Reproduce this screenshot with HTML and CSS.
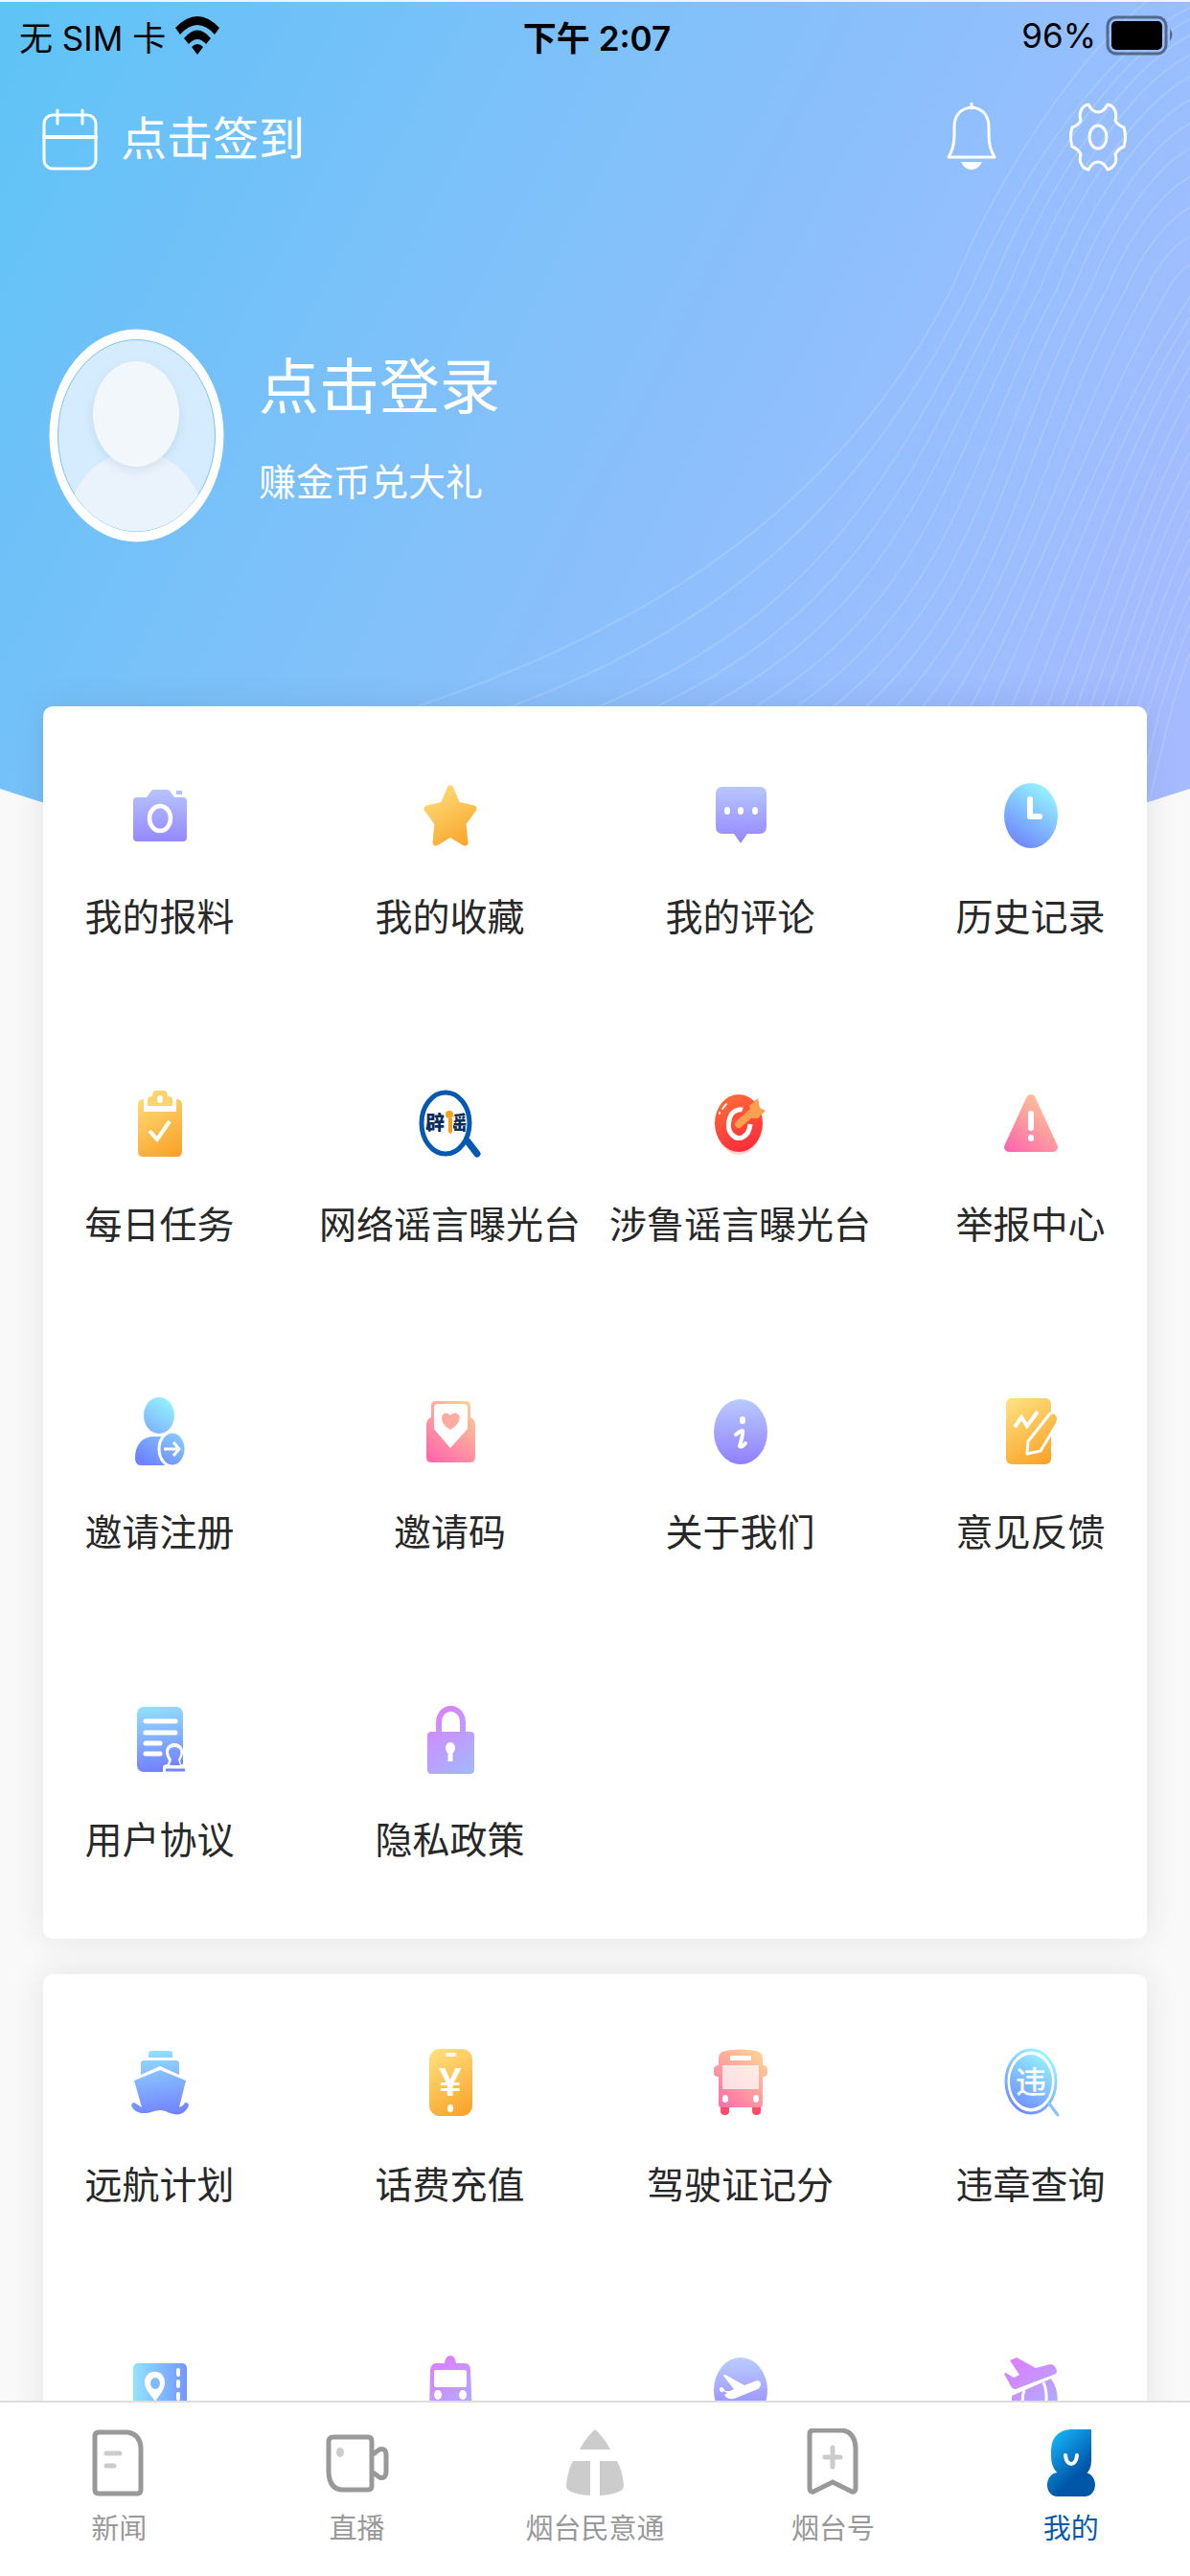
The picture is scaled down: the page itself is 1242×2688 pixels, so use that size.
FILE: index.html
```html
<!DOCTYPE html>
<html lang="zh-CN">
    <head>
        <meta charset="utf-8">
        <meta name="viewport" content="width=device-width, initial-scale=1">
        <title>我的</title>
        <link rel="stylesheet" href="styles.css">
    </head>
    <body>
        <!-- shared icon gradients -->
        <svg class="defs" width="0" height="0" aria-hidden="true">
            <defs>
                <linearGradient id="purple" gradientUnits="userSpaceOnUse" x1="34" y1="4" x2="34" y2="72"><stop offset="0" stop-color="#b9ccff"/><stop offset="1" stop-color="#9180ff"/></linearGradient>
                <linearGradient id="orange" gradientUnits="userSpaceOnUse" x1="14" y1="4" x2="54" y2="72"><stop offset="0" stop-color="#ffe07f"/><stop offset="1" stop-color="#f9a126"/></linearGradient>
                <linearGradient id="blue" gradientUnits="userSpaceOnUse" x1="14" y1="68" x2="54" y2="10"><stop offset="0" stop-color="#6d83ff"/><stop offset="1" stop-color="#96f6ff"/></linearGradient>
                <linearGradient id="sky" gradientUnits="userSpaceOnUse" x1="28" y1="2" x2="38" y2="72"><stop offset="0" stop-color="#93e2ff"/><stop offset="1" stop-color="#7280ff"/></linearGradient>
                <linearGradient id="pink" gradientUnits="userSpaceOnUse" x1="12" y1="68" x2="58" y2="10"><stop offset="0" stop-color="#ff66ac"/><stop offset="1" stop-color="#ffd194"/></linearGradient>
                <linearGradient id="violet" gradientUnits="userSpaceOnUse" x1="14" y1="10" x2="58" y2="72"><stop offset="0" stop-color="#dc80ff"/><stop offset="1" stop-color="#a2b8ff"/></linearGradient>
                <linearGradient id="red" gradientUnits="userSpaceOnUse" x1="18" y1="10" x2="44" y2="66"><stop offset="0" stop-color="#ff6a38"/><stop offset="1" stop-color="#ff2b3c"/></linearGradient>
                <linearGradient id="brand" gradientUnits="userSpaceOnUse" x1="10" y1="10" x2="56" y2="60"><stop offset="0" stop-color="#16b4fa"/><stop offset=".7" stop-color="#0057a8"/></linearGradient>
            </defs>
        </svg>
        <div class="screen">
            <main class="content">
                <svg class="backdrop" viewBox="0 0 1242 930" preserveAspectRatio="none" aria-hidden="true">
                    <defs>
                        <linearGradient id="skyBg" gradientUnits="userSpaceOnUse" x1="0" y1="100" x2="1240" y2="740">
                            <stop offset="0" stop-color="#60c3f6"/>
                            <stop offset=".2" stop-color="#72c1f9"/>
                            <stop offset=".5" stop-color="#86c0fa"/>
                            <stop offset=".77" stop-color="#99beff"/>
                            <stop offset="1" stop-color="#a6bbff"/>
                        </linearGradient>
                        <clipPath id="curve"><path d="M0 0H1242V821Q621 1028 0 821Z"/></clipPath>
                    </defs>
                    <path d="M0 0H1242V821Q621 1028 0 821Z" fill="url(#skyBg)"/>
                    <g id="waves" clip-path="url(#curve)"></g>
                </svg>
                <div class="status">
                    <div class="carrier">
                        <span>无 SIM 卡</span>
                        <svg width="46" height="40" viewBox="0 0 46 40"><path d="M0 12Q23-12 46 12L41 19Q23-1 5 19ZM9 23Q23 6 37 23L32 29Q23 19 14 29ZM17 32Q23 26 29 32L23 40Z"/></svg>
                    </div>
                    <div class="time">下午 2:07</div>
                    <div class="power">
                        <span>96%</span>
                        <svg width="72" height="42" viewBox="0 0 72 42"><rect x="2" y="2" width="61" height="38" rx="9" fill="none" stroke="#000" stroke-opacity=".45" stroke-width="3"/><rect x="6" y="6" width="53" height="30" rx="5"/><path d="M67 14Q72 20 67 27Z" fill-opacity=".45"/></svg>
                    </div>
                </div>
                <div class="toolbar">
                    <button class="signin">
                        <svg width="58" height="66" viewBox="0 0 58 66" fill="none" stroke="#fff" stroke-width="3" stroke-linecap="round"><rect x="2" y="7" width="54" height="56" rx="9"/><path d="M2 30H56" stroke-width="4"/><path d="M16 2V16M42 2V16"/></svg>
                        <span>点击签到</span>
                    </button>
                    <div class="tools">
                        <button aria-label="消息">
                            <svg width="60" height="72" viewBox="0 0 60 72" fill="none" stroke="#fff" stroke-width="3"><path d="M6 57Q12 47 12 34V26C12 12 20 6 30 5C40 6 48 12 48 26V34Q48 47 54 57Z" stroke-linejoin="round"/><path d="M30 1V6" stroke-linecap="round"/><path d="M19 62H41Q37 70 30 70Q23 70 19 62Z" fill="#fff" stroke="none"/></svg>
                        </button>
                        <button aria-label="设置">
                            <svg width="60" height="72" viewBox="0 0 60 72" fill="none" stroke="#fff" stroke-width="3" stroke-linejoin="round"><path d="M13 7Q15 3 20 2Q24 10 30 10Q36 10 40 2Q45 3 47 7Q50 11 48 19Q51 24 57 26Q60 36 57 46Q51 48 48 54Q50 61 47 65Q44 69 40 70Q36 62 30 62Q24 62 20 70Q15 69 13 65Q10 61 12 54Q9 48 3 46Q0 36 3 26Q9 24 12 19Q10 11 13 7Z"/><ellipse cx="30" cy="36" rx="9" ry="12"/></svg>
                        </button>
                    </div>
                </div>
                <div class="profile">
                    <svg class="avatar" viewBox="0 0 183 223" aria-hidden="true">
                        <defs><clipPath id="face"><ellipse cx="91.500" cy="111.500" rx="82" ry="100"/></clipPath></defs>
                        <ellipse cx="91.500" cy="111.500" rx="91" ry="111" fill="#fff"/>
                        <ellipse cx="91.500" cy="111.500" rx="82" ry="100" fill="#d4ecfd" stroke="#7bc3f6"/>
                        <g clip-path="url(#face)">
                            <ellipse cx="91" cy="208" rx="72" ry="80" fill="#eaf3fc"/>
                            <ellipse class="head" cx="91" cy="89" rx="45" ry="55" fill="#f2f7fb"/>
                        </g>
                    </svg>
                    <div class="login">
                        <a class="name" href="#">点击登录</a>
                        <a class="tip" href="#">赚金币兑大礼</a>
                    </div>
                </div>
                <section class="card">
                    <div class="grid">
                        <a class="item" href="#">
                            <svg viewBox="0 0 68 76"><path d="M10 19H20L25 12Q26 11 28 11H41Q43 11 44 12L49 19H58Q62 19 62 23V61Q62 65 58 65H10Q6 65 6 61V23Q6 19 10 19ZM51 12H57V16H51Z" fill="url(#purple)"/><ellipse cx="34" cy="41" rx="11" ry="13" fill="none" stroke="#fff" stroke-width="4.500"/></svg>
                            <span>我的报料</span>
                        </a>
                        <a class="item" href="#">
                            <svg viewBox="0 0 68 76"><path d="M34 10L41 27L58 31L47 46L49 66L34 57L19 66L21 46L10 31L27 27Z" fill="url(#orange)" stroke="url(#orange)" stroke-width="7" stroke-linejoin="round"/></svg>
                            <span>我的收藏</span>
                        </a>
                        <a class="item" href="#">
                            <svg viewBox="0 0 68 76"><path d="M15 8H54Q61 8 61 16V49Q61 57 54 57H41L34 67L27 57H15Q8 57 8 49V16Q8 8 15 8Z" fill="url(#purple)"/><g fill="#fff"><ellipse cx="20" cy="33" rx="3" ry="4"/><ellipse cx="34" cy="33" rx="3" ry="4"/><ellipse cx="49" cy="33" rx="3" ry="4"/></g></svg>
                            <span>我的评论</span>
                        </a>
                        <a class="item" href="#">
                            <svg viewBox="0 0 68 76"><ellipse cx="34" cy="38" rx="28" ry="34" fill="url(#blue)"/><path d="M33 21V39H43" fill="none" stroke="#fff" stroke-width="6" stroke-linecap="round" stroke-linejoin="round"/></svg>
                            <span>历史记录</span>
                        </a>
                        <a class="item" href="#">
                            <svg viewBox="0 0 68 76"><path d="M16 13H17V26H51V13H52Q57 13 57 19V67Q57 73 52 73H16Q11 73 11 67V19Q11 13 16 13Z" fill="url(#orange)"/><path d="M30 4H38Q42 4 42 10Q47 10 47 14V20H21V14Q21 10 26 10Q26 4 30 4Z" fill="#fdd36b"/><ellipse cx="34" cy="13" rx="3" ry="4" fill="#fff"/><path d="M23 46L31 55L44 36" fill="none" stroke="#fff" stroke-width="4"/></svg>
                            <span>每日任务</span>
                        </a>
                        <a class="item" href="#">
                            <svg viewBox="0 0 68 76"><ellipse cx="29" cy="38" rx="25" ry="32" fill="#fff" stroke="#0559b3" stroke-width="5"/><path d="M52 57L62 70" stroke="#0559b3" stroke-width="7" stroke-linecap="round"/><text class="mark" x="8" y="45">辟</text><text class="mark" x="31" y="45">谣</text><path d="M30 25H37V50Q33 53 31 48V33Z" fill="#fff"/><path d="M32 33H36V47Q34 51 32 47Z" fill="#f9a01b"/><circle cx="33" cy="29" r="4" fill="#f9a01b"/></svg>
                            <span>网络谣言曝光台</span>
                        </a>
                        <a class="item" href="#">
                            <svg viewBox="0 0 68 76"><ellipse cx="32" cy="42" rx="23" ry="29" fill="#ffd5d3"/><ellipse cx="32" cy="38" rx="25" ry="30" fill="url(#red)"/><path d="M36 24Q33 23 29 25C21 28 19 44 25 50C32 58 43 52 44 39" fill="none" stroke="#fff" stroke-width="5"/><path d="M32 39L48 25" stroke="#ff9f50" stroke-width="8" stroke-linecap="round"/><path d="M43 20L52 12L54 22L60 25L52 33H46Z" fill="#ff9f50"/><path d="M15 23L19 18M12 28V27" stroke="#fff" stroke-width="2" stroke-linecap="round"/></svg>
                            <span>涉鲁谣言曝光台</span>
                        </a>
                        <a class="item" href="#">
                            <svg viewBox="0 0 68 76"><path d="M34 13L11 63H57Z" fill="url(#pink)" stroke="url(#pink)" stroke-width="10" stroke-linejoin="round"/><path d="M34 28V43M34 53V54" stroke="#fff" stroke-width="6" stroke-linecap="round"/></svg>
                            <span>举报中心</span>
                        </a>
                        <a class="item" href="#">
                            <svg viewBox="0 0 68 76"><ellipse cx="33" cy="22" rx="16" ry="19" fill="url(#blue)"/><path d="M28 44H48V74H14Q8 74 8 66C8 52 16 44 28 44Z" fill="url(#blue)"/><ellipse cx="47" cy="57" rx="14" ry="18" fill="url(#blue)" stroke="#fff" stroke-width="3"/><path d="M38 57H53M48 50L54 57L48 64" fill="none" stroke="#fff" stroke-width="3"/></svg>
                            <span>邀请注册</span>
                        </a>
                        <a class="item" href="#">
                            <svg viewBox="0 0 68 76"><path d="M14 24V12Q14 7 19 7H50Q55 7 55 12V24Q60 26 60 32V65Q60 71 55 71H14Q9 71 9 65V32Q9 26 14 24Z" fill="url(#pink)"/><path d="M17 14Q17 10 21 10H48Q52 10 52 14V36L34 56L17 36Z" fill="#fff"/><path d="M34 37C18 27 27 14 34 22C42 14 51 27 34 37Z" fill="#ffaba0"/></svg>
                            <span>邀请码</span>
                        </a>
                        <a class="item" href="#">
                            <svg viewBox="0 0 68 76"><ellipse cx="34" cy="39" rx="28" ry="34" fill="url(#purple)"/><ellipse cx="36" cy="27" rx="3" ry="4" fill="#fff"/><path d="M29 42Q35 37 36 38Q37 40 33 54Q35 56 39 51" fill="none" stroke="#fff" stroke-width="4" stroke-linecap="round" stroke-linejoin="round"/></svg>
                            <span>关于我们</span>
                        </a>
                        <a class="item" href="#">
                            <svg viewBox="0 0 68 76"><rect x="8" y="4" width="47" height="69" rx="6" fill="url(#orange)"/><path d="M31 49L54 20Q58 17 61 21Q64 25 61 31L44 59L30 62Z" fill="url(#orange)" stroke="#fff" stroke-width="3" stroke-linejoin="round"/><path d="M17 34L24 24L30 33L41 18" fill="none" stroke="#fff" stroke-width="4"/></svg>
                            <span>意见反馈</span>
                        </a>
                        <a class="item" href="#">
                            <svg viewBox="0 0 68 76"><rect x="10" y="5" width="48" height="68" rx="7" fill="url(#sky)"/><path d="M19 20H50M19 32H50M19 43H34M19 54H34" stroke="#fff" stroke-width="5" stroke-linecap="round"/><path d="M37 76V67Q39 65 42 65L43 61C36 49 43 43 49 43C56 43 62 50 55 61L56 65H62V76Z" fill="#fff"/><path d="M44 66L46 60C40 51 44 47 49 47C55 47 58 52 53 60L55 66Z" fill="url(#sky)"/><path d="M40 71H60" stroke="#7385ff" stroke-width="3"/></svg>
                            <span>用户协议</span>
                        </a>
                        <a class="item" href="#">
                            <svg viewBox="0 0 68 76"><path d="M22 34V22C22 2 47 2 47 22V34" fill="none" stroke="url(#violet)" stroke-width="6"/><rect x="10" y="31" width="49" height="44" rx="4" fill="url(#violet)"/><ellipse cx="34" cy="48" rx="5" ry="6" fill="#fff"/><path d="M34 48V62" stroke="#fff" stroke-width="5"/></svg>
                            <span>隐私政策</span>
                        </a>
                    </div>
                </section>
                <section class="card">
                    <div class="grid">
                        <a class="item" href="#">
                            <svg viewBox="0 0 68 76"><path d="M22 11V7Q22 4 25 4H44Q47 4 47 7V11ZM14 29V17Q14 14 17 14H51Q54 14 54 17V29L34 20ZM34 24L61 35L54 63Q59 61 60 58Q64 58 64 61C58 75 46 70 40 67Q34 65 28 67C20 70 8 71 4 61Q5 56 9 59L15 63L7 35Z" fill="url(#sky)"/></svg>
                            <span>远航计划</span>
                        </a>
                        <a class="item" href="#">
                            <svg viewBox="0 0 68 76"><rect x="12" y="2" width="45" height="70" rx="11" fill="url(#orange)"/><path d="M31 8H38" stroke="#fff" stroke-width="4" stroke-linecap="round"/><text class="yen" x="34" y="51">¥</text><ellipse cx="34" cy="64" rx="3" ry="4" fill="#fff"/></svg>
                            <span>话费充值</span>
                        </a>
                        <a class="item" href="#">
                            <svg viewBox="0 0 68 76"><path d="M13 62H22V67Q22 71 18 71Q13 71 13 67ZM46 62H55V67Q55 71 51 71Q46 71 46 67Z" fill="#ff4c69"/><path d="M11 12Q11 5 18 4Q34 1 50 4Q57 5 57 12V19Q62 19 62 24V27Q62 31 57 31V60Q57 63 54 63H14Q11 63 11 60V31Q6 31 6 27V24Q6 19 11 19Z" fill="url(#pink)"/><rect x="23" y="9" width="22" height="5" rx="1" fill="#fff"/><rect x="15" y="19" width="38" height="25" rx="1" fill="#fff" fill-opacity=".72"/><g fill="#fff"><ellipse cx="18" cy="54" rx="3" ry="4"/><ellipse cx="50" cy="54" rx="3" ry="4"/></g></svg>
                            <span>驾驶证记分</span>
                        </a>
                        <a class="item" href="#">
                            <svg viewBox="0 0 68 76"><ellipse cx="34" cy="36" rx="26" ry="33" fill="none" stroke="url(#blue)" stroke-width="3"/><ellipse cx="34" cy="36" rx="22" ry="28" fill="url(#blue)"/><path d="M53 59L62 71" stroke="#85c5ff" stroke-width="3" stroke-linecap="round"/><text class="wei" x="34" y="48">违</text></svg>
                            <span>违章查询</span>
                        </a>
                        <a class="item" href="#">
                            <svg viewBox="0 0 68 76"><defs><linearGradient id="ticket"><stop offset="0" stop-color="#93e2ff"/><stop offset="1" stop-color="#7296ff"/></linearGradient></defs><rect x="6" y="9" width="56" height="54" rx="5" fill="url(#ticket)"/><path d="M29 49C23 40 18 36 18 29C18 14 39 14 39 29C39 36 35 40 29 49Z" fill="#fff"/><ellipse cx="29" cy="30" rx="5" ry="6" fill="#80bdff"/><path d="M53 16V21M53 28V33M53 41V46" stroke="#fff" stroke-width="4" stroke-linecap="round"/></svg>
                        </a>
                        <a class="item" href="#">
                            <svg viewBox="0 0 68 76"><path d="M28 9Q29 1 34 1Q39 1 40 9H49Q55 9 55 16L57 62H12L13 16Q14 9 19 9Z" fill="url(#violet)"/><rect x="17" y="16" width="34" height="18" rx="2" fill="#fff"/><g fill="#fff"><ellipse cx="21" cy="42" rx="4" ry="5"/><ellipse cx="47" cy="42" rx="4" ry="5"/></g></svg>
                        </a>
                        <a class="item" href="#">
                            <svg viewBox="0 0 68 76"><ellipse cx="34" cy="37" rx="28" ry="34" fill="url(#purple)"/><path d="M16 22Q17 20 20 22L38 32L51 27Q55 27 55 31Q55 34 52 36L27 46Q19 47 17 42L20 40L16 38Q14 41 12 37Q12 32 16 35L18 38L23 38L27 36Z" fill="#fff"/></svg>
                        </a>
                        <a class="item" href="#">
                            <svg viewBox="0 0 68 76"><path d="M12 6L19 3L39 14L54 10Q60 10 61 18L60 20L18 36Q14 36 12 31L6 20L8 19L16 24L22 21ZM14 43L55 25Q65 40 60 56H14Z" fill="url(#violet)"/><path d="M27 37Q24 45 26 56M47 29Q52 40 49 56" fill="none" stroke="#fff" stroke-width="3"/></svg>
                        </a>
                    </div>
                </section>
            </main>
            <nav class="tabs">
                <a href="#">
                    <svg viewBox="0 0 66 72"><path d="M12 4H42Q55 6 56 20V64Q56 68 52 68H12Q8 68 8 64V8Q8 4 12 4Z" fill="none" stroke="#999" stroke-width="5"/><path d="M20 26H34M20 39H28" stroke="#ccc" stroke-width="5" stroke-linecap="round"/></svg>
                    <span>新闻</span>
                </a>
                <a href="#">
                    <svg viewBox="0 0 66 72"><path d="M8 9H44Q48 9 48 13V60Q48 64 44 64H18Q4 64 3 46V14Q3 9 8 9ZM48 28L56 22Q63 20 63 28V45Q63 53 56 51L48 45" fill="none" stroke="#999" stroke-width="5"/><ellipse cx="15" cy="25" rx="4" ry="5" fill="#ccc"/></svg>
                    <span>直播</span>
                </a>
                <a href="#">
                    <svg viewBox="0 0 66 72" fill="#ccc"><path d="M33 1Q43 10 49 22H17Q23 10 33 1ZM10 34H28V70Q3 68 3 60Q4 45 10 34ZM38 34H56Q62 45 63 60Q63 68 38 70Z"/></svg>
                    <span>烟台民意通</span>
                </a>
                <a href="#">
                    <svg viewBox="0 0 66 72"><path d="M13 2H42Q56 3 57 20V62Q57 67 53 66L33 56L13 66Q9 67 9 62V6Q9 2 13 2Z" fill="none" stroke="#999" stroke-width="5"/><path d="M33 20V40M25 30H41" stroke="#ccc" stroke-width="5" stroke-linecap="round"/></svg>
                    <span>烟台号</span>
                </a>
                <a class="active" href="#">
                    <svg viewBox="0 0 66 72"><path d="M20 46H46C62 46 62 72 46 71H20C4 72 4 46 20 46Z" fill="url(#brand)"/><path d="M32 1H54V34C54 60 13 60 12 30V22Q13 3 32 1Z" fill="url(#brand)"/><path d="M27 28C28 40 38 40 39 28" fill="none" stroke="#fff" stroke-width="4" stroke-linecap="round"/></svg>
                    <span>我的</span>
                </a>
            </nav>
        </div>
        <script>
            // thin wave lines: x at the card edge, x at y=300, y at the right edge
            var bottom = [430,529,621,682,736,786,829,868,902,934,962,988,1012,1034,1055,1074,1092,1108,1123,1137,1150,1163,1175,1187,1199,1211,1223];
            var middle = [993,1013,1033,1051,1068,1085,1103,1120,1137,1155,1175,1196,1219];
            var edge = [-30,6,18,35,55,78,102,127,153,183,215,245,275,308,329,353,380,410,440,470,500,530,560,590,620,650,680];
            var waves = document.getElementById("waves");
            for(var i = 0; i < bottom.length; i++){
                var b = bottom[i], e = edge[i], d;
                if(i < middle.length){
                    var m = middle[i], t = i / 12, w = 1242 - m, h = 300 - e;
                    d = "M" + b + " 737C" + (b + 260 - 180 * t) + " " + (650 - 63 * t) + " " + (m - 113 + 38 * t) + " " + (520 - 90 * t) + " " + m + " 300";
                    d += "C" + (m + w * 0.2) + " " + (300 - h * 0.37) + " " + (m + w * 0.6) + " " + (e + h * 0.15) + " 1242 " + e;
                }
                else{
                    var s = 1242 - b, r = 737 - e;
                    d = "M" + (b - 25) + " 840L" + b + " 737C" + (b + s * 0.35) + " " + (737 - r * 0.38) + " " + (b + s * 0.65) + " " + (e + r * 0.25) + " 1242 " + e;
                }
                var p = document.createElementNS("http://www.w3.org/2000/svg", "path");
                p.setAttribute("d", d);
                waves.appendChild(p);
            }
        </script>
    </body>
</html>
```
FILE: styles.css
```css
*{
    box-sizing: border-box;
}
body{
    margin: 0;
    background-color: #f9f9f9;
    font-family: "Liberation Sans", "Noto Sans CJK SC", sans-serif;
    color: #282828;
}
a{
    color: inherit;
    text-decoration: none;
}
button{
    padding: 0;
    border: 0;
    background: none;
    color: inherit;
    font: inherit;
}
svg{
    display: block;
    flex: none;
}
.defs{
    position: absolute;
}
.screen{
    display: flex;
    flex-direction: column;
    height: 100vh;
    border-top: 2px solid #f1f3f8;
}
.content{
    position: relative;
    z-index: 0;
    flex: 1;
    min-height: 0;
    overflow: hidden;
}
.backdrop{
    position: absolute;
    top: 0;
    left: 0;
    z-index: -1;
    width: 100%;
    height: 930px;
}
#waves{
    fill: none;
    stroke: #fff;
    stroke-opacity: .14;
    stroke-width: 2;
}
.status{
    display: grid;
    grid-template-columns: 1fr auto 1fr;
    align-items: center;
    height: 70px;
    padding: 0 16px 0 20px;
    font-family: Inter, "Noto Sans CJK SC", sans-serif;
    font-size: 35px;
    color: #000;
}
.carrier, .power{
    display: flex;
    align-items: center;
    gap: 10px;
}
.power{
    justify-content: flex-end;
}
.time{
    font-weight: 600;
}
.toolbar{
    display: flex;
    align-items: center;
    justify-content: space-between;
    height: 148px;
    padding: 0 66px 0 44px;
    color: #fff;
}
.signin{
    display: flex;
    align-items: center;
    gap: 24px;
    font-size: 48px;
    line-height: 60px;
}
.tools{
    display: flex;
    gap: 72px;
    padding-bottom: 6px;
}
.profile{
    display: flex;
    align-items: center;
    gap: 36px;
    padding: 123px 51px 171px;
    color: #fff;
}
.avatar{
    width: 183px;
    height: 223px;
}
.head{
    filter: drop-shadow(0 4px 5px rgba(120, 150, 180, .2));
}
.login{
    display: flex;
    flex-direction: column;
    gap: 30px;
    padding-bottom: 12px;
}
.name{
    font-size: 63px;
    line-height: 80px;
}
.tip{
    font-size: 39px;
    line-height: 60px;
}
.card{
    margin: 0 45px 37px;
    padding-bottom: 2px;
    border-radius: 10px;
    background-color: #fff;
    box-shadow: 0 0 36px rgba(0, 0, 0, .09);
}
/* a bit wider than the card, so the outer icons sit near its edges */
.grid{
    display: grid;
    grid-template-columns: repeat(4, 1fr);
    margin: 0 -30px;
}
.item{
    display: flex;
    flex-direction: column;
    align-items: center;
    height: 321px;
    padding-top: 76px;
    font-size: 39px;
    line-height: 58px;
    white-space: nowrap;
}
.item svg{
    width: 68px;
    height: 76px;
    margin-bottom: 40px;
}
.mark{
    font-size: 20px;
    font-weight: 900;
    fill: #0c2d5c;
}
.yen{
    font-size: 42px;
    font-weight: bold;
    text-anchor: middle;
    fill: #fff;
}
.wei{
    font-size: 32px;
    font-weight: 500;
    text-anchor: middle;
    fill: #fff;
}
.tabs{
    position: relative;
    z-index: 1;
    display: grid;
    grid-template-columns: repeat(5, 1fr);
    padding: 27px 0 28px;
    border-top: 2px solid #ddd;
    background-color: #fff;
    color: #999;
    font-size: 29px;
    line-height: 42px;
}
.tabs a{
    display: flex;
    flex-direction: column;
    align-items: center;
    gap: 12px;
}
.tabs svg{
    width: 66px;
    height: 72px;
}
.tabs .active{
    color: #0559ab;
}
```
